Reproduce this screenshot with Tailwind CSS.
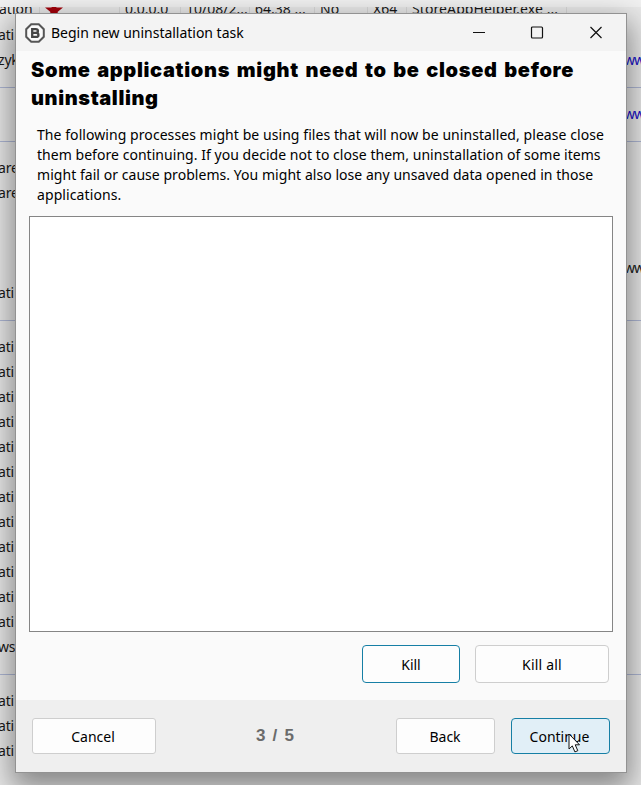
<!DOCTYPE html>
<html lang="en">
<head>
<meta charset="utf-8">
<title>Begin new uninstallation task</title>
<script src="https://cdn.jsdelivr.net/npm/@tailwindcss/browser@4"></script>
</head>
<body class="relative h-[785px] w-[641px] overflow-hidden bg-[#e9e9e9] text-[14px] text-[#181818]" style="font-family:'Noto Sans','Open Sans',sans-serif">
<main id="list" class="-mt-[3px] flex flex-col whitespace-nowrap"></main>
<div class="absolute inset-x-0 top-0 h-[7px] bg-[#f1f1f1]"></div>

<section class="absolute left-[15px] top-[13px] flex h-[760px] w-[612px] flex-col border border-[#929292] bg-[#fafafa] text-black shadow-[0_12px_28px_4px_rgba(0,0,0,0.42)]">
  <header class="flex h-[37px] shrink-0 items-center bg-[#f3f3f3] pl-[9px]">
    <svg class="size-5" viewBox="0 0 20 20" fill="none"><path d="M6.200 1.200h7.600l5 5v7.600l-5 5H6.200l-5-5V6.200z" fill="#fafafa" stroke="#555" stroke-width="2"/><path d="M7.200 6.200h3.500c3 0 3 3.700 0 3.700H7.200zm0 3.700h4c3 0 3 4 0 4h-4z" stroke="#454545" stroke-width="2.300"/></svg>
    <h1 class="ml-[6px] text-[14px] tracking-[-0.02px]">Begin new uninstallation task</h1>
    <svg class="ml-auto mr-[23px] h-4 w-[134px]" viewBox="0 0 134 16" fill="none" stroke="#111" stroke-width="1.200"><path d="M4 7.500h12M121.500 2l11 11M132.500 2l-11 11"/><rect x="62.500" y="2" width="11" height="11" rx="1"/></svg>
  </header>
  <h2 class="mt-[5px] ml-[15px] text-[20px] leading-7 font-black whitespace-nowrap" style="font-family:Inter,'Liberation Sans',sans-serif"><span class="block tracking-[0.67px] [word-spacing:2px]">Some applications might need to be closed before</span><span class="block tracking-[0.6px]">uninstalling</span></h2>
  <p class="mt-[13px] ml-[21px] text-[14px] leading-5 whitespace-nowrap"><span class="block tracking-[0.065px]">The following processes might be using files that will now be uninstalled, please close</span><span class="block tracking-[0.04px]">them before continuing. If you decide not to close them, uninstallation of some items</span><span class="block tracking-[0.045px]">might fail or cause problems. You might also lose any unsaved data opened in those</span><span class="block tracking-[0.1px]">applications.</span></p>
  <div class="mx-[13px] mt-[11px] h-[416px] shrink-0 border border-[#858585] bg-white"></div>
  <div class="mt-[13px] mr-[17px] flex justify-end gap-[15px]">
    <button class="h-[38px] w-[98px] rounded-[4px] border border-[#167fa5] bg-[#fdfdfd]">Kill</button>
    <button class="h-[38px] w-[134px] rounded-[4px] border border-[#cecece] bg-[#fdfdfd] tracking-[0.2px]">Kill all</button>
  </div>
  <footer class="mt-[17px] flex flex-1 items-start bg-[#efefef] px-4 pt-[18px]">
    <button class="h-[36px] w-[124px] rounded-[3px] border border-[#cecece] bg-[#fdfdfd] pr-[2px]">Cancel</button>
    <strong class="ml-[100px] pt-[6px] text-[17px] leading-6 tracking-[1.200px] text-[#6b6b6b]" style="font-family:'Liberation Sans',sans-serif">3 / 5</strong>
    <button class="ml-auto h-[36px] w-[99px] rounded-[3px] border border-[#cecece] bg-[#fdfdfd] pr-px">Back</button>
    <button class="ml-4 h-[36px] w-[99px] rounded-[4px] border border-[#167fa5] bg-[#e1eff7] pr-[2px]">Continue</button>
  </footer>
</section>
<svg class="absolute left-[568px] top-[733px] h-5 w-3" viewBox="0 0 12 20"><path d="M1 1v15l3.300-3.100 2.600 6 2.900-1.200-2.600-5.900h4.300z" fill="#fff" stroke="#111"/></svg>
<script>
const cls = "flex h-[25px] shrink-0 items-center justify-between";
const names = ["ation","ati","zyk","|","","|","are","are","","","","ati","|",...Array(12).fill("ati"),"ws","|","ati","ati","ati",""];
const links = {2:"blue",4:"blue",10:"black"};
document.getElementById("list").innerHTML = names.map((n,i)=>{
  if(n==="|") return '<div class="flex h-[29px] shrink-0 items-center pt-px"><div class="h-px w-full bg-[#aeb7d4]"></div></div>';
  if(i===0) return '<div class="flex h-[25px] shrink-0 text-[14px] leading-[24px] [&>span]:border-r [&>span]:border-[#d8d8d8] [&>span]:shrink-0"><span class="w-[40px] -indent-px">ation</span><span class="flex w-[80px] items-center pl-1"><svg class="h-[18px] w-5" viewBox="0 0 20 18"><path d="M10 0l2.500 6.500H19l-5.500 4.500 2.500 6-6-3.500-6 3.500 2.500-6L1 6.500h6.500z" fill="#a30009"/></svg></span><span class="w-[61px] pl-[5px]">0.0.0.0</span><span class="w-[69px] pl-[5px]">10/08/2...</span><span class="w-[65px] pl-[5px]">64.38 ...</span><span class="w-[53px] pl-[5px]">No</span><span class="w-[39px] pl-[5px]">X64</span><span class="w-[160px] pl-[5px] tracking-[0.1px]">StoreAppHelper.exe ...</span></div>';
  const color = links[i]==="blue" ? "text-[#1a10c8]" : "text-[#202020]";
  return `<div class="${cls}"><span class="-ml-[2px] tracking-[-0.2px]">${n}</span>${links[i]?`<span class="w-[17px] tracking-[-1px] ${color}">ww</span>`:""}</div>`;
}).join("");
</script>
</body>
</html>
